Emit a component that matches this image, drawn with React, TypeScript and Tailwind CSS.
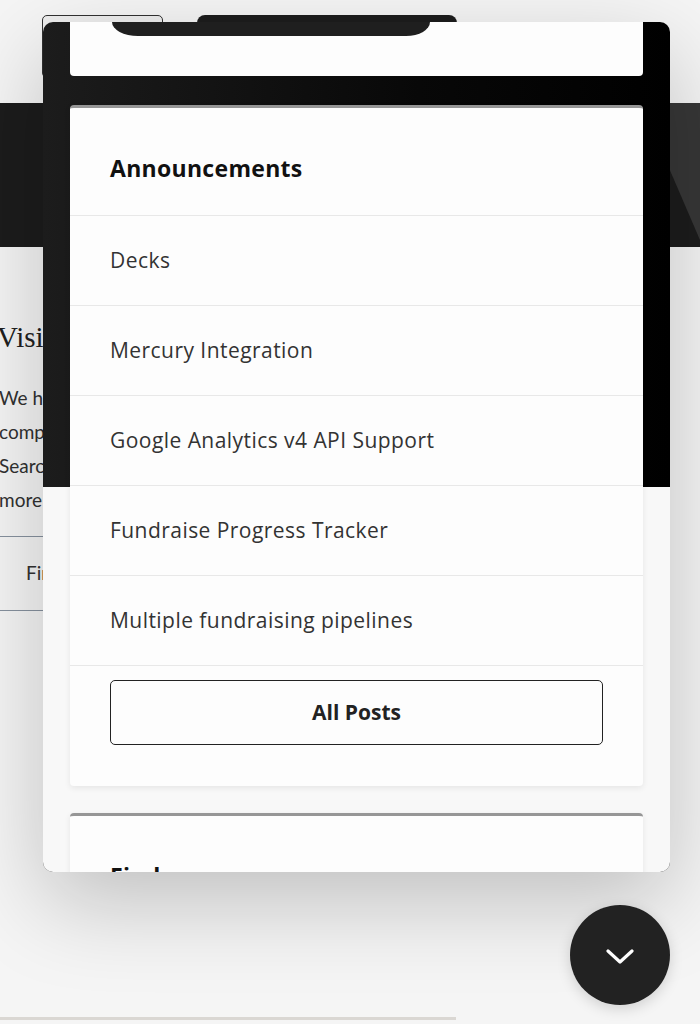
import React from "react";

const rows = [
  "Decks",
  "Mercury Integration",
  "Google Analytics v4 API Support",
  "Fundraise Progress Tracker",
  "Multiple fundraising pipelines",
];

function Heading({ children }: { children: React.ReactNode }) {
  return (
    <div className="h-[107px] pt-[46px] pl-[40px] text-[23px] leading-[28px] font-bold text-[#111] tracking-[0.3px]">
      {children}
    </div>
  );
}

export default function App() {
  return (
    <div className="relative w-[700px] h-[1024px] overflow-hidden bg-white font-['Open_Sans',sans-serif]">
      {/* background page */}
      <div className="flex flex-col h-full">
        <header className="h-[103px] flex items-start pt-[15px] pl-[42px] gap-[34px] bg-white">
          <div className="w-[121px] h-[63px] border-[1.5px] border-[#333] rounded-[5px] bg-[#f8f8f8]" />
          <div className="w-[260px] h-[40px] bg-[#1f1f1f] rounded-[8px]" />
        </header>
        <div className="h-[144px] bg-[#1e1e1e] flex">
          <svg className="w-full h-full" viewBox="0 0 700 144" preserveAspectRatio="none">
            <polygon points="641,0 700,0 700,137" fill="#3a3a3a" />
          </svg>
        </div>
        <main className="pt-[72px] pl-0 pr-[40px] flex flex-col bg-white flex-1">
          <h2 className="ml-[-3px] text-[29px] leading-[36px] text-[#222] font-['Liberation_Serif',serif]">
            Visibility for founders
          </h2>
          <p className="mt-[26px] ml-[-1px] text-[19px] leading-[34px] text-[#333] font-['Lato',sans-serif]">
            We help
            <br />
            companies
            <br />
            Search
            <br />
            more
          </p>
          <div className="mt-[19px] h-[75px] border-y-[1.5px] border-[#8d98a6] flex items-center pl-[26px] text-[19px] text-[#333] font-['Lato',sans-serif]">
            Find out more
          </div>
          <div className="mt-auto mb-[4px] w-[456px] h-[3px] bg-[#e3e0dc]" />
        </main>
      </div>

      {/* dim layer */}
      <div className="absolute inset-0 bg-black/[0.04]" />

      {/* panel */}
      <div className="absolute left-[43px] top-[22px] w-[627px] h-[850px] rounded-[10px] overflow-hidden shadow-[0_30px_90px_rgba(0,0,0,0.22)] bg-[#f8f8f8]">
        <div className="h-full px-[27px] flex flex-col bg-[linear-gradient(to_bottom,transparent_465px,#f8f8f8_465px),linear-gradient(to_right,#1c1c1c,#080808_60%,#000)]">
          {/* card 1 */}
          <div className="h-[54px] shrink-0 bg-[#fdfdfd] rounded-b-[4px] relative">
            <div className="ml-[42px] w-[318px] h-[14px] bg-[#1f1f1f] rounded-bl-[26px_14px] rounded-br-[24px_14px]" />
          </div>

          {/* card 2 */}
          <div className="mt-[29px] shrink-0 bg-[#fdfdfd] rounded-[4px] border-t-[3px] border-[#969696] shadow-[0_2px_6px_rgba(0,0,0,0.08)]">
            <Heading>Announcements</Heading>
            {rows.map((r) => (
              <div
                key={r}
                className="h-[90px] border-t border-[#e8e8e8] flex items-center pl-[40px] text-[21px] tracking-[0.45px] text-[#333]"
              >
                {r}
              </div>
            ))}
            <div className="border-t border-[#e8e8e8] pt-[14px] pb-[41px] px-[40px]">
              <div className="h-[65px] border-[1.5px] border-[#222] rounded-[5px] flex items-center justify-center text-[21px] font-bold text-[#222]">
                All Posts
              </div>
            </div>
          </div>

          {/* card 3 */}
          <div className="mt-[27px] shrink-0 bg-[#fdfdfd] rounded-[4px] border-t-[3px] border-[#969696] shadow-[0_2px_6px_rgba(0,0,0,0.08)]">
            <Heading>Find</Heading>
          </div>
        </div>
      </div>

      {/* FAB */}
      <button className="absolute left-[570px] top-[905px] w-[100px] h-[100px] rounded-full bg-[#222] flex items-center justify-center shadow-[0_4px_14px_rgba(0,0,0,0.15)]">
        <svg width="28" height="16" viewBox="0 0 28 16" className="mt-[4px]">
          <polyline points="2,2 14,13 26,2" fill="none" stroke="white" strokeWidth="3.2" strokeLinecap="round" strokeLinejoin="round" />
        </svg>
      </button>
    </div>
  );
}
